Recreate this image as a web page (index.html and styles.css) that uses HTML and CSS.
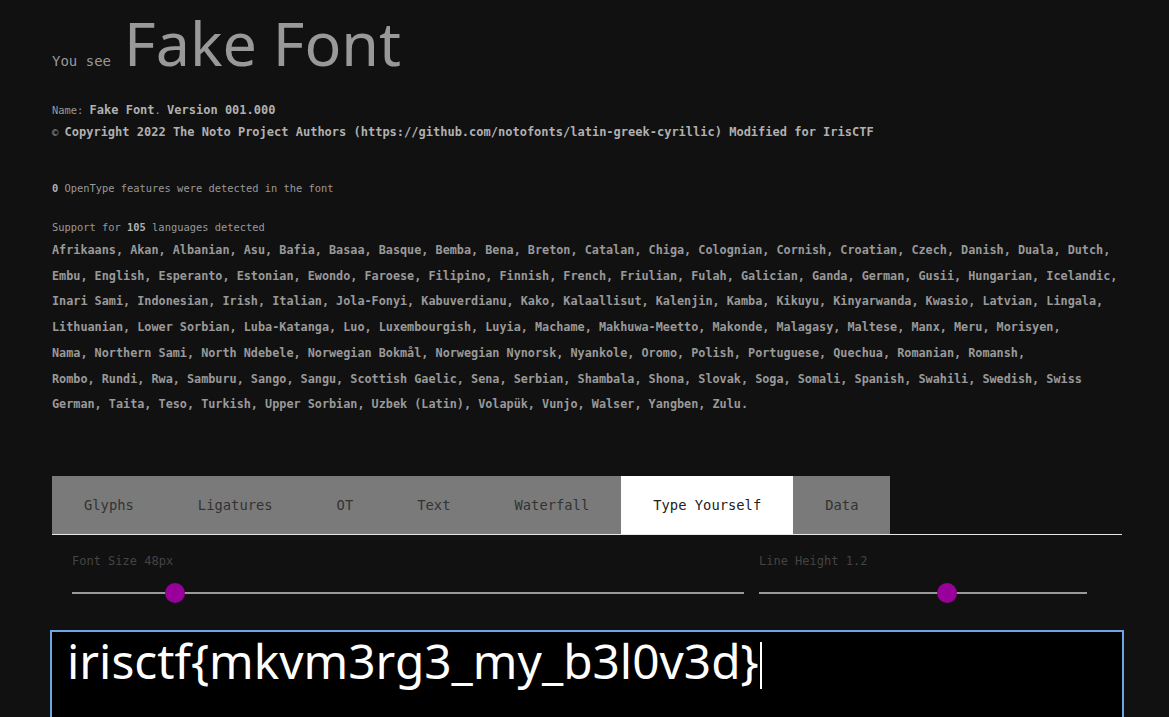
FILE: index.html
```html
<!DOCTYPE html>
<html lang="en">
<head>
<meta charset="utf-8">
<title>Fake Font</title>
<link rel="stylesheet" href="styles.css">
</head>
<body>
<main class="page">
  <header class="title">
    <span class="you-see">You see</span>
    <h1 class="font-name">Fake Font</h1>
  </header>

  <section class="meta">
    <p class="meta-line"><span class="small">Name: </span><b>Fake Font</b><span class="small">. </span><b>Version 001.000</b></p>
    <p class="meta-line"><span class="small">© </span><b>Copyright 2022 The Noto Project Authors (https://github.com/notofonts/latin-greek-cyrillic) Modified for IrisCTF</b></p>
  </section>

  <p class="note features"><b>0</b> OpenType features were detected in the font</p>
  <p class="note support">Support for <b>105</b> languages detected</p>
  <p class="langs">Afrikaans, Akan, Albanian, Asu, Bafia, Basaa, Basque, Bemba, Bena, Breton, Catalan, Chiga, Colognian, Cornish, Croatian, Czech, Danish, Duala, Dutch,<br>Embu, English, Esperanto, Estonian, Ewondo, Faroese, Filipino, Finnish, French, Friulian, Fulah, Galician, Ganda, German, Gusii, Hungarian, Icelandic,<br>Inari Sami, Indonesian, Irish, Italian, Jola-Fonyi, Kabuverdianu, Kako, Kalaallisut, Kalenjin, Kamba, Kikuyu, Kinyarwanda, Kwasio, Latvian, Lingala,<br>Lithuanian, Lower Sorbian, Luba-Katanga, Luo, Luxembourgish, Luyia, Machame, Makhuwa-Meetto, Makonde, Malagasy, Maltese, Manx, Meru, Morisyen,<br>Nama, Northern Sami, North Ndebele, Norwegian Bokmål, Norwegian Nynorsk, Nyankole, Oromo, Polish, Portuguese, Quechua, Romanian, Romansh,<br>Rombo, Rundi, Rwa, Samburu, Sango, Sangu, Scottish Gaelic, Sena, Serbian, Shambala, Shona, Slovak, Soga, Somali, Spanish, Swahili, Swedish, Swiss<br>German, Taita, Teso, Turkish, Upper Sorbian, Uzbek (Latin), Volapük, Vunjo, Walser, Yangben, Zulu.</p>

  <nav class="tabs">
    <span class="tab">Glyphs</span>
    <span class="tab">Ligatures</span>
    <span class="tab">OT</span>
    <span class="tab">Text</span>
    <span class="tab">Waterfall</span>
    <span class="tab active">Type Yourself</span>
    <span class="tab">Data</span>
  </nav>

  <section class="controls">
    <div class="control">
      <label class="control-label">Font Size 48px</label>
      <div class="slider"><div class="track"></div><div class="thumb" style="left: 15.3%"></div></div>
    </div>
    <div class="control">
      <label class="control-label">Line Height 1.2</label>
      <div class="slider"><div class="track"></div><div class="thumb" style="left: 57.3%"></div></div>
    </div>
  </section>

  <div class="typebox">irisctf{mkvm3rg3_my_b3l0v3d}<span class="caret"></span></div>
</main>
</body>
</html>
```

FILE: styles.css
```css
html, body {
  margin: 0;
  padding: 0;
  background: #111111;
}

html {
  overflow: hidden;
}

body {
  font-family: "DejaVu Sans Mono", "Liberation Mono", monospace;
  color: #999999;
  height: 717px;
  overflow: hidden;
}

.page {
  width: 1070px;
  padding: 0 0 0 52px;
}

.title {
  display: flex;
  align-items: baseline;
  gap: 13px;
  margin-top: 11px;
  height: 64px;
}

.you-see {
  font-size: 14px;
  color: #999999;
}

.font-name {
  margin: 0;
  font-family: "Noto Sans", "Open Sans", sans-serif;
  font-weight: 400;
  font-size: 61px;
  line-height: 64px;
  color: #999999;
}

.meta {
  margin-top: 24px;
}

.meta-line {
  margin: 0;
  line-height: 22px;
  font-size: 12px;
}

.meta-line b {
  color: #b0b0b0;
  font-weight: 700;
}

.small {
  font-size: 10.4px;
  color: #999999;
}

.note {
  margin: 0;
  font-size: 10.4px;
  line-height: 16px;
  color: #999999;
}

.note b {
  color: #b0b0b0;
}

.features {
  margin-top: 37px;
}

.support {
  margin-top: 23px;
}

.langs {
  margin: 3px 0 0;
  font-size: 11.8px;
  line-height: 25.7px;
  font-weight: 700;
  color: #999999;
  white-space: nowrap;
}

.tabs {
  display: flex;
  margin-top: 58px;
  border-bottom: 1px solid #e6e6e6;
}

.tab {
  display: flex;
  align-items: center;
  height: 58px;
  padding: 0 32px;
  background: #7a7a7a;
  color: #333333;
  font-size: 13.8px;
}

.tab.active {
  background: #ffffff;
  color: #222222;
}

.controls {
  display: grid;
  grid-template-columns: 672px 328px;
  column-gap: 15px;
  padding-left: 20px;
  margin-top: 18px;
}

.control-label {
  display: block;
  font-size: 12px;
  line-height: 16px;
  color: #444444;
}

.slider {
  position: relative;
  height: 20px;
  margin-top: 14px;
}

.track {
  position: absolute;
  left: 0;
  right: 0;
  top: 9px;
  height: 2px;
  background: #9a9a9a;
}

.thumb {
  position: absolute;
  top: 0;
  width: 20px;
  height: 20px;
  margin-left: -10px;
  border-radius: 50%;
  background: #990099;
}

.typebox {
  margin: 27px 0 0 -2px;
  width: 1074px;
  height: 120px;
  box-sizing: border-box;
  padding: 0 15px;
  background: #000000;
  border: 2px solid #6fa3e8;
  color: #ffffff;
  font-family: "Noto Sans", "Open Sans", sans-serif;
  font-size: 47.8px;
  line-height: 57.6px;
}

.caret {
  display: inline-block;
  width: 2px;
  height: 47px;
  margin-left: 1px;
  background: #ffffff;
  vertical-align: -10px;
}
```
